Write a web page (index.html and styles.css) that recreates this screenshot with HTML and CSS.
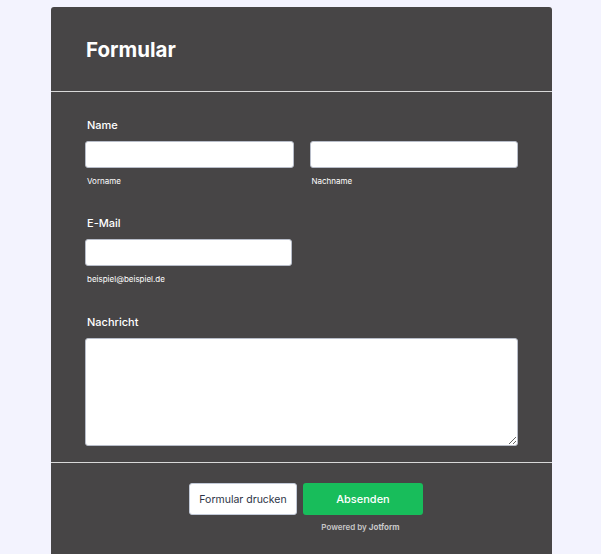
FILE: index.html
```html
<!DOCTYPE html>
<html lang="de">
<head>
    <meta charset="UTF-8">
    <meta name="viewport" content="width=device-width, initial-scale=1.0">
    <title>Formular</title>
    <link rel="stylesheet" href="styles.css">
</head>
<body>

    <div class="form-card">
        <div class="form-header">
            <h1>Formular</h1>
        </div>

        <div class="form-body">
            <div class="field">
                <label class="field-label">Name</label>
                <div class="name-row">
                    <div class="sub-field">
                        <input type="text" class="input-field">
                        <span class="sub-label">Vorname</span>
                    </div>
                    <div class="sub-field">
                        <input type="text" class="input-field">
                        <span class="sub-label">Nachname</span>
                    </div>
                </div>
            </div>

            <div class="field field-email">
                <label class="field-label">E-Mail</label>
                <div class="sub-field email">
                    <input type="email" class="input-field">
                    <span class="sub-label">beispiel@beispiel.de</span>
                </div>
            </div>

            <div class="field">
                <label class="field-label">Nachricht</label>
                <textarea class="input-field message"></textarea>
            </div>
        </div>

        <div class="form-footer">
            <div class="button-row">
                <button class="print-button">Formular drucken</button>
                <button class="submit-button">Absenden</button>
            </div>
            <div class="powered">Powered by <b>Jotform</b></div>
        </div>
    </div>

</body>
</html>
```

FILE: styles.css
```css
body {
    margin: 0;
    background-color: #f3f3fe;
    font-family: Inter, "Noto Sans", sans-serif;
}
.form-card {
    width: 501px;
    margin: 7px 0 0 51px;
    background-color: #474546;
    border-radius: 3px 3px 0 0;
    min-height: 547px;
    color: #fff;
}
.form-header {
    height: 84px;
    padding: 0 35px;
    border-bottom: 1px solid #d8d8d8;
    display: flex;
    align-items: center;
}
.form-header h1 {
    margin: 0;
    font-size: 20.5px;
    font-weight: 700;
    color: #fff;
}
.form-body {
    padding: 26px 34px 16px;
    border-bottom: 1px solid #d8d8d8;
}
.field {
    margin-bottom: 30px;
}
.field-email {
    margin-bottom: 31px;
}
.field:last-child {
    margin-bottom: 0;
}
.field-label {
    display: block;
    font-size: 11px;
    font-weight: 500;
    margin-bottom: 9px;
    padding-left: 2px;
}
.name-row {
    display: flex;
    gap: 16px;
}
.sub-field {
    flex: 1;
    display: flex;
    flex-direction: column;
}
.sub-field.email {
    width: 207px;
}
.input-field {
    box-sizing: border-box;
    height: 27px;
    width: 100%;
    margin: 0;
    border: 1px solid #b8bdc9;
    border-radius: 3px;
    background: #fff;
}
.sub-label {
    font-size: 8px;
    margin-top: 8px;
    padding-left: 2px;
    color: #fff;
}
.message {
    display: block;
    height: 108px;
    resize: vertical;
}
.form-footer {
    padding: 20px 0 0;
    text-align: center;
}
.button-row {
    display: flex;
    justify-content: center;
    gap: 6px;
    padding-left: 9px;
}
.print-button {
    height: 32px;
    width: 108px;
    padding: 0;
    border: 1px solid #c3cad8;
    border-radius: 3px;
    background: #fff;
    color: #2c3345;
    font-family: Inter, "Noto Sans", sans-serif;
    font-size: 10.5px;
}
.submit-button {
    height: 32px;
    width: 120px;
    padding: 0;
    border: none;
    border-radius: 3px;
    background: #18bd5b;
    color: #fff;
    font-family: Inter, "Noto Sans", sans-serif;
    font-size: 11px;
    font-weight: 500;
}
.powered {
    margin: 7px 0 0 118px;
    font-size: 8px;
    font-weight: 600;
    color: #c8c8c8;
}
.powered b {
    font-weight: 700;
}
```
